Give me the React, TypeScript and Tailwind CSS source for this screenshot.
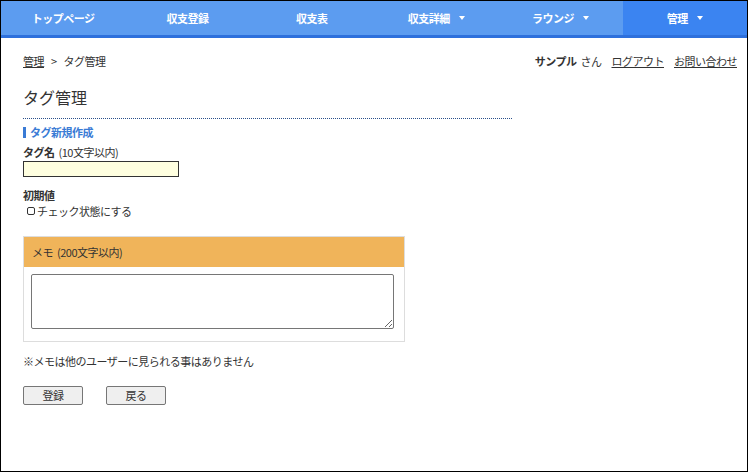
import React from 'react';

const navItems = [
  { label: 'トップページ', caret: false },
  { label: '収支登録', caret: false },
  { label: '収支表', caret: false },
  { label: '収支詳細', caret: true },
  { label: 'ラウンジ', caret: true },
  { label: '管理', caret: true, active: true },
];

const Caret = () => (
  <span className="ml-[9px] inline-block w-0 h-0 border-l-[3.5px] border-r-[3.5px] border-t-[4px] border-l-transparent border-r-transparent border-t-white align-middle" />
);

const App: React.FC = () => {
  return (
    <div
      className="w-[748px] h-[472px] border border-black bg-white text-[11px] tracking-[-0.5px] text-[#333] overflow-hidden"
      style={{ fontFamily: '"Noto Sans CJK JP", "Liberation Sans", sans-serif' }}
    >
      <nav className="grid grid-cols-6 h-[37px] bg-[#5c9cf0] border-b-[3px] border-[#2e70dc]">
        {navItems.map((item) => (
          <div
            key={item.label}
            className={`flex items-center justify-center text-white font-bold leading-none ${item.active ? 'bg-[#3b84f1]' : ''}`}
          >
            {item.label}
            {item.caret && <Caret />}
          </div>
        ))}
      </nav>

      <div className="flex justify-between pl-[22px] pr-[10px] pt-[15px] leading-[16px]">
        <div>
          <span className="underline">管理</span>
          <span className="mx-[7px]">&gt;</span>
          <span>タグ管理</span>
        </div>
        <div className="flex gap-[10px]">
          <span>
            <span className="font-bold">サンプル</span>
            <span className="ml-[4px]">さん</span>
          </span>
          <span className="underline">ログアウト</span>
          <span className="underline">お問い合わせ</span>
        </div>
      </div>

      <div className="pl-[22px]">
        <h1 className="text-[16px] tracking-normal leading-[20px] mt-[18px] text-[#333]">タグ管理</h1>
        <div className="w-[489px] mt-[11px] border-b border-dotted border-[#2a4f8a]" />

        <div className="mt-[6px] flex items-center leading-[14px]">
          <span className="w-[3px] h-[11px] bg-[#3a7bd5] mr-[4px]" />
          <span className="font-bold text-[#3a7bd5]">タグ新規作成</span>
        </div>

        <div className="mt-[6px] leading-[14px]">
          <span className="font-bold">タグ名</span>
          <span className="ml-[4px]">(10文字以内)</span>
        </div>
        <input
          type="text"
          className="block mt-[2px] w-[156px] h-[16px] bg-[#ffffe0] border border-[#333] outline-none"
        />

        <div className="mt-[11px] font-bold leading-[14px]">初期値</div>
        <label className="mt-[2px] ml-[4px] flex items-center leading-[14px]">
          <input type="checkbox" className="w-[8px] h-[8px] mr-[2px] appearance-none border border-[#333] rounded-[2px] bg-white" />
          チェック状態にする
        </label>

        <div className="mt-[18px] w-[382px] border border-[#dddddd]">
          <div className="h-[30px] bg-[#f0b45a] flex items-center pl-[8px] text-[#333]">
            メモ<span className="ml-[4px]">(200文字以内)</span>
          </div>
          <div className="px-[7px] pt-[7px] pb-[12px]">
            <textarea className="block w-[363px] h-[55px] border border-[#767676] rounded-[2px] resize" />
          </div>
        </div>

        <div className="mt-[12px] leading-[14px]">※メモは他のユーザーに見られる事はありません</div>

        <div className="mt-[18px] flex gap-[23px]">
          <button className="w-[60px] h-[19px] bg-[#efefef] border border-[#767676] rounded-[2px] text-[11px] leading-none text-[#333]">
            登録
          </button>
          <button className="w-[60px] h-[19px] bg-[#efefef] border border-[#767676] rounded-[2px] text-[11px] leading-none text-[#333]">
            戻る
          </button>
        </div>
      </div>
    </div>
  );
};

export default App;
